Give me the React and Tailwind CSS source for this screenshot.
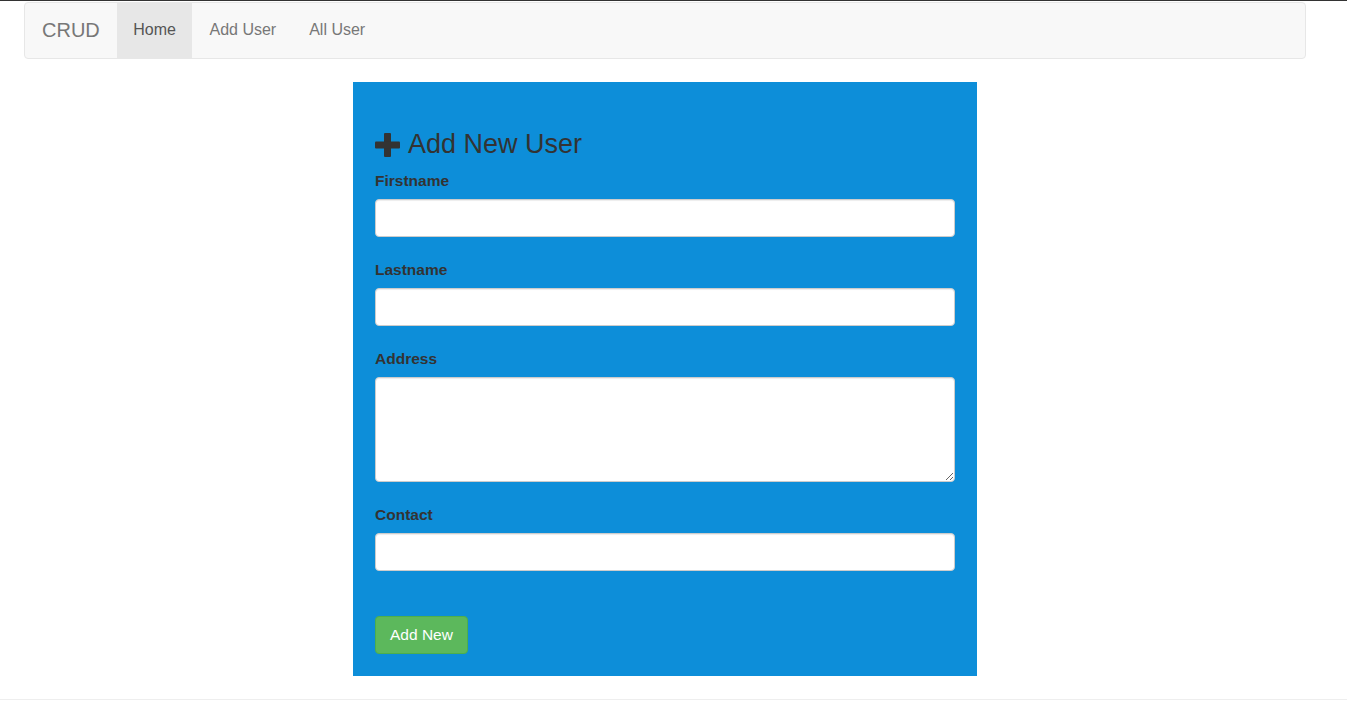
export default function App() {
    const labelCls = "block font-bold text-[15.5px] leading-[22px] text-[#333] mb-[7px]";
    const inputCls = "block w-full h-[38px] bg-white border border-[#ccc] rounded-[4px] shadow-[inset_0_1px_1px_rgba(0,0,0,0.075)] px-3 text-[15px] text-[#555] outline-none";

    return (
        <div className="min-h-[718px] bg-white border-t border-[#333] font-['Liberation_Sans',Arial,sans-serif]">
            {/* Navbar */}
            <div className="ml-[24px] mt-px w-[1282px] h-[57px] bg-[#f8f8f8] border border-[#e7e7e7] rounded-[4px] flex items-stretch">
                <div className="flex items-center pb-[2px] px-[17px] text-[20px] text-[#777]">CRUD</div>
                <div className="flex items-center pb-[2px] px-[16.5px] bg-[#e7e7e7] text-[16px] text-[#555]">Home</div>
                <div className="flex items-center pb-[2px] px-[17px] text-[16px] text-[#777]">Add User</div>
                <div className="flex items-center pb-[2px] px-[16px] text-[16px] text-[#777]">All User</div>
            </div>

            {/* Form panel */}
            <div className="ml-[353px] mt-[23px] w-[624px] bg-[#0d8ed9] px-[22px] pt-[48px] pb-[22px]">
                <h3 className="flex items-center gap-[8px] text-[27px] leading-[29px] text-[#333] mb-[11px]">
                    <svg width="25" height="24" viewBox="0 0 25 24" className="shrink-0">
                        <rect x="9" y="0" width="7" height="24" rx="1" fill="#333" />
                        <rect x="0" y="8.5" width="25" height="7" rx="1" fill="#333" />
                    </svg>
                    <span>Add New User</span>
                </h3>

                <label className={labelCls}>Firstname</label>
                <input type="text" className={inputCls} />

                <label className={labelCls + " mt-[22px]"}>Lastname</label>
                <input type="text" className={inputCls} />

                <label className={labelCls + " mt-[22px]"}>Address</label>
                <textarea className="block w-full h-[105px] bg-white border border-[#ccc] rounded-[4px] shadow-[inset_0_1px_1px_rgba(0,0,0,0.075)] px-3 py-2 text-[15px] text-[#555] outline-none" />

                <label className={labelCls + " mt-[22px]"}>Contact</label>
                <input type="text" className={inputCls} />

                <button className="mt-[45px] h-[38px] px-[14px] bg-[#5cb85c] border border-[#4cae4c] rounded-[4px] text-white text-[15.5px]">
                    Add New
                </button>
            </div>

            <div className="mt-[23px] border-t border-[#eee]" />
        </div>
    );
}
